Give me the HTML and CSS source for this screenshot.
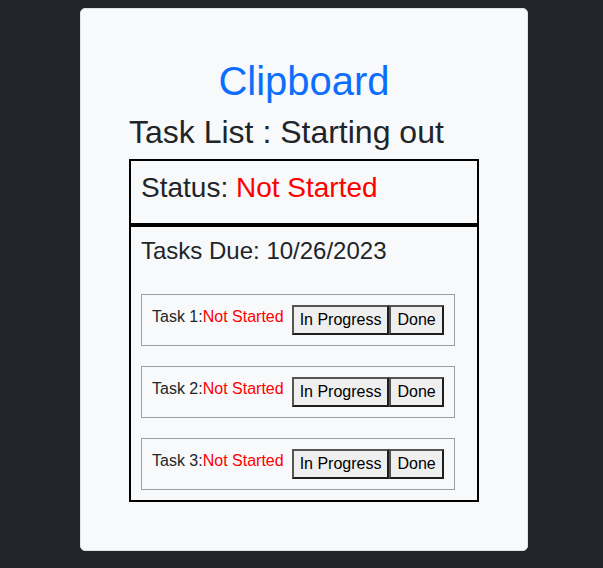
FILE: index.html
```html
<!DOCTYPE html>
<html lang="en">
<head>
<meta charset="utf-8">
<title>Clipboard</title>
<link rel="stylesheet" href="styles.css">
</head>
<body>
  <main class="card">
    <h1 class="title">Clipboard</h1>
    <h2 class="list-title">Task List : Starting out</h2>
    <section class="status-box">
      <h3 class="status">Status: <span class="red">Not Started</span></h3>
    </section>
    <section class="tasks-box">
      <h4 class="due">Tasks Due: 10/26/2023</h4>
      <div class="task-list">
        <div class="task">
          <span class="task-label">Task 1:<span class="red">Not Started</span></span>
          <span class="btns"><button class="btn">In Progress</button><button class="btn">Done</button></span>
        </div>
        <div class="task">
          <span class="task-label">Task 2:<span class="red">Not Started</span></span>
          <span class="btns"><button class="btn">In Progress</button><button class="btn">Done</button></span>
        </div>
        <div class="task">
          <span class="task-label">Task 3:<span class="red">Not Started</span></span>
          <span class="btns"><button class="btn">In Progress</button><button class="btn">Done</button></span>
        </div>
      </div>
    </section>
  </main>
</body>
</html>
```

FILE: styles.css
```css
html, body {
  margin: 0;
  padding: 0;
}
body {
  background: #212529;
  font-family: "Liberation Sans", Arial, sans-serif;
  font-size: 16px;
  line-height: 1.5;
  color: #212529;
  padding-top: 8px;
}
.card {
  box-sizing: border-box;
  width: 448px;
  margin-left: 80px;
  background: #f8f9fa;
  border: 1px solid #dee2e6;
  border-radius: 5px;
  padding: 48px;
}
h1, h2, h3, h4 {
  margin: 0 0 8px;
  font-weight: 400;
  line-height: 1.2;
}
.title {
  font-size: 40px;
  color: #0d6efd;
  text-align: center;
}
.list-title {
  font-size: 32px;
}
.status-box, .tasks-box {
  border: 2px solid #000;
  padding: 10px;
}
.status {
  font-size: 28px;
}
.due {
  font-size: 24px;
}
.red {
  color: #ff0000;
}
.task-list {
  display: flex;
  flex-direction: column;
  align-items: flex-start;
  gap: 20px;
  padding-top: 20px;
}
.task {
  display: flex;
  align-items: flex-start;
  gap: 8px;
  padding: 10px;
  border: 1px solid #a0a0a0;
}
.btns {
  display: flex;
}
.btn {
  font-family: inherit;
  font-size: 16px;
  line-height: 24px;
  margin: 0;
  padding: 1px 6px;
  color: #000;
  background: #efefef;
  border: 2px solid;
  border-color: #555 #1e1e1e #1e1e1e #555;
  border-radius: 0;
}
```
